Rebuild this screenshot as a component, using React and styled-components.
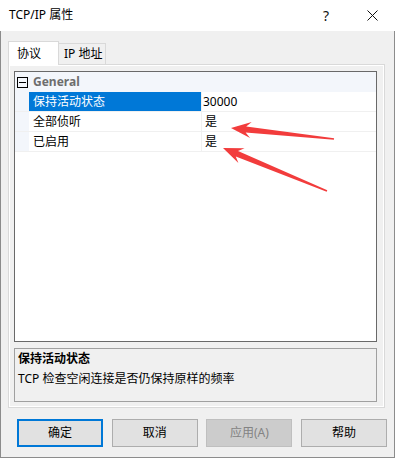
import React from "react";
import styled, { createGlobalStyle } from "styled-components";

const Global = createGlobalStyle`
  html, body { margin: 0; padding: 0; background: #ffffff; }
  body { font-family: "Noto Sans", "Noto Sans CJK SC", sans-serif; font-size: 12px; color: #000; }
  * { box-sizing: border-box; }
`;

const Window = styled.div`
  position: relative;
  width: 395px;
  height: 458px;
  display: flex;
  flex-direction: column;
  background: #fff;
`;

const TitleBar = styled.div`
  height: 31px;
  display: flex;
  align-items: center;
  background: #fff;
`;

const Title = styled.div`
  flex: 1;
  padding-left: 9px;
  font-size: 12px;
  line-height: 16px;
  padding-bottom: 1px;
`;

const CaptionButton = styled.div`
  width: 46px;
  height: 31px;
  display: flex;
  align-items: center;
  justify-content: center;
  font-size: 14px;
  color: #111;
`;

const Body = styled.div`
  flex: 1;
  display: flex;
  flex-direction: column;
  background: #f0f0f0;
  border: 1px solid #8c8c8c;
  border-top: none;
  padding: 10px 0 10px 0;
`;

const TabStrip = styled.div`
  display: flex;
  align-items: flex-end;
  height: 24px;
  margin: 0 9px 0 7px;
  position: relative;
  z-index: 1;
`;

const Tab = styled.div`
  height: ${(p) => (p.$active ? "24px" : "22px")};
  width: ${(p) => p.$w}px;
  border: 1px solid #d9d9d9;
  border-bottom: ${(p) => (p.$active ? "none" : "1px solid #d9d9d9")};
  ${(p) => (p.$active ? "" : "border-left: none;")}
  background: ${(p) => (p.$active ? "#ffffff" : "#f0f0f0")};
  display: flex;
  align-items: center;
  padding-left: ${(p) => p.$pl}px;
  padding-top: ${(p) => (p.$active ? "1px" : "0")};
  font-size: 12px;
  line-height: 16px;
`;

const Panel = styled.div`
  margin: -1px 9px 0 7px;
  height: 344px;
  border: 1px solid #d9d9d9;
  background: #f0f0f0;
  box-shadow: inset 0 0 0 1px #ffffff;
  padding: 6px 7px 5px 5px;
  display: flex;
  flex-direction: column;
  gap: 6px;
`;

const Grid = styled.div`
  height: 271px;
  border: 1px solid #696969;
  background: #ffffff;
  display: flex;
  flex-direction: column;
`;

const Row = styled.div`
  display: grid;
  grid-template-columns: 14px 173px 1fr;
  height: 20px;
  border-bottom: 1px solid #f0f0f0;
`;

const CategoryRow = styled.div`
  height: 20px;
  display: flex;
  align-items: center;
  background: #f3f6fb;
`;

const Margin = styled.div`
  background: #f3f6fb;
  display: flex;
  align-items: center;
  justify-content: center;
`;

const Expander = styled.div`
  width: 11px;
  height: 11px;
  border: 1px solid #000;
  margin: 0 5px 0 2px;
  display: flex;
  align-items: center;
  justify-content: center;
  &::after {
    content: "";
    width: 7px;
    height: 1px;
    background: #000;
  }
`;

const CategoryLabel = styled.div`
  font-weight: bold;
  color: #6d6d6d;
  font-size: 12px;
  line-height: 16px;
`;

const LabelCell = styled.div`
  background: ${(p) => (p.$selected ? "#0078d7" : "#ffffff")};
  color: ${(p) => (p.$selected ? "#ffffff" : "#000000")};
  border-right: 1px solid #f0f0f0;
  padding-left: 4px;
  display: flex;
  align-items: center;
  font-size: 12px;
  line-height: 16px;
`;

const ValueCell = styled.div`
  padding-left: ${(p) => p.$pl}px;
  display: flex;
  align-items: center;
  font-size: 12px;
  line-height: 16px;
`;

const Desc = styled.div`
  height: 54px;
  border: 1px solid #a0a0a0;
  background: #f0f0f0;
  padding: 2px 0 0 3px;
  display: flex;
  flex-direction: column;
  gap: 4px;
`;

const DescTitle = styled.div`
  font-weight: bold;
  font-size: 12px;
  line-height: 16px;
`;

const DescText = styled.div`
  font-size: 12px;
  line-height: 16px;
`;

const ButtonRow = styled.div`
  margin: 11px 7px 0 16px;
  display: flex;
  justify-content: space-between;
`;

const Button = styled.div`
  width: 86px;
  height: 28px;
  display: flex;
  align-items: center;
  justify-content: center;
  font-size: 12px;
  line-height: 16px;
  background: ${(p) => (p.$disabled ? "#cccccc" : "#e1e1e1")};
  color: ${(p) => (p.$disabled ? "#838383" : "#000")};
  border: ${(p) =>
    p.$default ? "2px solid #0078d7" : p.$disabled ? "1px solid #bfbfbf" : "1px solid #adadad"};
`;

const Overlay = styled.svg`
  position: absolute;
  left: 0;
  top: 0;
  pointer-events: none;
`;

const rows = [
  { label: "保持活动状态", value: "30000", selected: true, pl: 1 },
  { label: "全部侦听", value: "是", pl: 3 },
  { label: "已启用", value: "是", pl: 3 },
];

export default function App() {
  return (
    <>
      <Global />
      <Window>
        <TitleBar>
          <Title>TCP/IP 属性</Title>
          <CaptionButton>?</CaptionButton>
          <CaptionButton>
            <svg width="11" height="11" viewBox="0 0 11 11">
              <path d="M0.5 0.5 L10.5 10.5 M10.5 0.5 L0.5 10.5" stroke="#111" strokeWidth="1" />
            </svg>
          </CaptionButton>
        </TitleBar>
        <Body>
          <TabStrip>
            <Tab $active $w={51} $pl={8}>协议</Tab>
            <Tab $w={47} $pl={5}>IP 地址</Tab>
          </TabStrip>
          <Panel>
            <Grid>
              <CategoryRow>
                <Expander />
                <CategoryLabel>General</CategoryLabel>
              </CategoryRow>
              {rows.map((r) => (
                <Row key={r.label}>
                  <Margin />
                  <LabelCell $selected={r.selected}>{r.label}</LabelCell>
                  <ValueCell $pl={r.pl}>{r.value}</ValueCell>
                </Row>
              ))}
            </Grid>
            <Desc>
              <DescTitle>保持活动状态</DescTitle>
              <DescText>TCP 检查空闲连接是否仍保持原样的频率</DescText>
            </Desc>
          </Panel>
          <ButtonRow>
            <Button $default>确定</Button>
            <Button>取消</Button>
            <Button $disabled>应用(A)</Button>
            <Button>帮助</Button>
          </ButtonRow>
        </Body>
        <Overlay width="395" height="458" viewBox="0 0 395 458">
          <polygon
            fill="#f23c3c"
            points="231,128 251.7,122.1 246.2,126.6 334.1,138.2 333.9,139.8 245.6,132.6 250.1,138.1"
          />
          <polygon
            fill="#f23c3c"
            points="223,148 244.6,148.2 238.0,150.9 327.3,190.3 326.7,191.7 235.8,156.5 238.4,163.0"
          />
        </Overlay>
      </Window>
    </>
  );
}
